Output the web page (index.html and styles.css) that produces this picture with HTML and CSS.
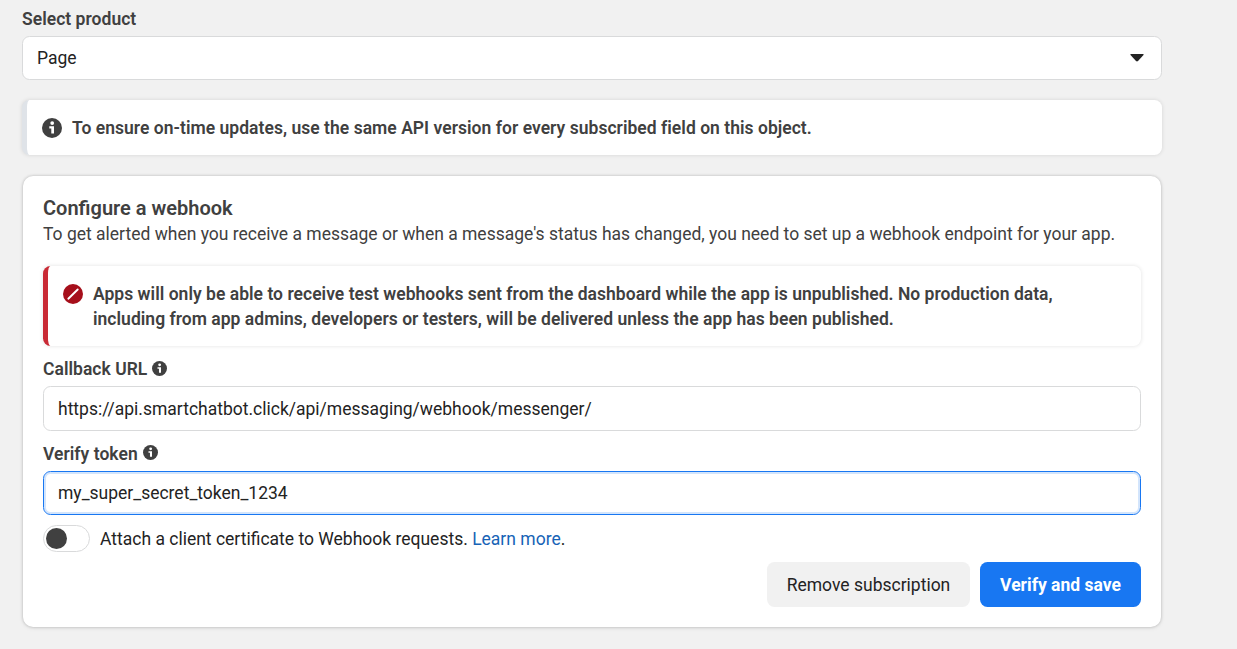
FILE: index.html
```html
<!DOCTYPE html>
<html lang="en">
<head>
<meta charset="utf-8">
<title>Configure a webhook</title>
<link rel="stylesheet" href="styles.css">
</head>
<body>
<svg class="defs" aria-hidden="true">
  <symbol id="info" viewBox="0 0 20 20">
    <circle cx="10" cy="10" r="10" fill="#404040"/>
    <circle cx="10.2" cy="5.1" r="1.9" fill="#fff"/>
    <path d="M7.3 8.2h4.7v7.4H9.3v-5.2H7.3z" fill="#fff"/>
  </symbol>
</svg>
<main class="page">
  <div class="label product-label"><span>Select product</span></div>
  <div class="select"><span>Page</span>
    <svg class="caret" viewBox="0 0 14 8"><path d="M.9 0h12.2q.9.1.4.9L8 7.1q-1 .9-2 0L.5.9Q0 .1.9 0z" fill="#232323"/></svg>
  </div>
  <div class="notice notice-info">
    <svg class="notice-icon"><use href="#info"/></svg>
    <div class="notice-text"><span>To ensure on-time updates, use the same API version for every subscribed field on this object.</span></div>
  </div>
  <section class="card">
    <h2 class="title"><span>Configure a webhook</span></h2>
    <p class="description"><span>To get alerted when you receive a message or when a message's status has changed, you need to set up a webhook endpoint for your app.</span></p>
    <div class="notice notice-error">
      <svg class="notice-icon" viewBox="0 0 20 20"><circle cx="10" cy="10" r="10" fill="#a60f1b"/><path d="M5.3 14.7l9.4-9.2" stroke="#fff" stroke-width="1.9" stroke-linecap="round"/></svg>
      <div class="notice-text"><span>Apps will only be able to receive test webhooks sent from the dashboard while the app is unpublished. No production data,</span><br><span>including from app admins, developers or testers, will be delivered unless the app has been published.</span></div>
    </div>
    <div class="label callback-label"><span>Callback URL</span><svg class="hint"><use href="#info"/></svg></div>
    <div class="field">https://api.smartchatbot.click/api/messaging/webhook/messenger/</div>
    <div class="label token-label"><span>Verify token</span><svg class="hint"><use href="#info"/></svg></div>
    <div class="field focused">my_super_secret_token_1234</div>
    <div class="certificate">
      <div class="toggle"><div class="knob"></div></div>
      <span class="certificate-text">Attach a client certificate to Webhook requests. <a class="link">Learn more</a>.</span>
    </div>
    <div class="actions">
      <button class="button secondary">Remove subscription</button>
      <button class="button primary">Verify and save</button>
    </div>
  </section>
</main>
</body>
</html>
```
FILE: styles.css
```css
* { box-sizing: border-box; }
body {
  margin: 0;
  background: #f1f1f1;
  font: 400 17.5px/25px Roboto, "Liberation Sans", sans-serif;
  color: #232323;
}
.defs { position: absolute; width: 0; height: 0; }
.page { width: 1162px; padding: 6px 0 30px 22px; }
.label {
  display: flex;
  align-items: center;
  gap: 5px;
  font-weight: 600;
  letter-spacing: .03px;
  color: #404040;
}
.product-label { height: 30px; padding-bottom: 3px; }
.select {
  display: flex;
  align-items: center;
  justify-content: space-between;
  height: 44px;
  padding: 0 17px 0 14px;
  border: 1px solid #d9dadb;
  border-radius: 7.5px;
  background: #fff;
}
.caret { width: 14px; height: 8px; }
.notice {
  display: flex;
  gap: 10px;
  border-radius: 7.5px;
  background: #fff;
  box-shadow: 0 0 4px rgba(0, 0, 0, .12);
  font-weight: 600;
  letter-spacing: .03px;
  color: #404040;
}
.notice-info {
  height: 55px;
  margin-top: 20px;
  padding: 16px 15px;
  border-left: 5px solid #dfe3e8;
}
.notice-icon { flex: none; width: 20px; height: 20px; margin-top: 2px; }
.notice-text { white-space: nowrap; }
.card {
  height: 451px;
  margin: 21px 1px 0;
  padding: 20px 20px 0;
  border-radius: 10px;
  background: #fff;
  box-shadow: 0 0 3px rgba(0, 0, 0, .22), 0 1px 5px rgba(0, 0, 0, .08);
}
.title { margin: 0; font-size: 20px; line-height: 25px; font-weight: 600; color: #404040; }
.description { margin: 0; padding-top: 1px; color: #404040; letter-spacing: -.006px; white-space: nowrap; }
.notice-error {
  height: 80px;
  margin-top: 19px;
  padding: 16px 15px;
  border-left: 5px solid #c92a35;
  letter-spacing: .024px;
}
.callback-label { margin-top: 11px; }
.hint { width: 15px; height: 15px; margin-top: -2px; }
.token-label .hint { margin-top: -4px; }
.field {
  height: 45px;
  margin-top: 4px;
  padding: 10px 14px 0;
  border: 1px solid #d9dadb;
  border-radius: 7.5px;
}
.token-label { margin-top: 11px; }
.field.focused {
  height: 44px;
  margin-top: 4px;
  padding-top: 9px;
  border-color: #1877f2;
  box-shadow: inset 0 0 0 2px #d3e5fc;
}
.certificate { display: flex; align-items: center; gap: 10px; margin-top: 10px; height: 27px; }
.certificate-text { padding-top: 2px; }
.toggle {
  width: 47px;
  height: 27px;
  padding: 2px;
  border: 1px solid #d9dadb;
  border-radius: 14px;
}
.knob { width: 21px; height: 21px; border-radius: 50%; background: #404040; }
.link { color: #1763b6; }
.actions { display: flex; justify-content: flex-end; gap: 10px; margin-top: 10px; }
.button {
  height: 45px;
  padding: 2px 0 0;
  border: 0;
  border-radius: 7.5px;
  font: inherit;
}
.secondary { width: 203px; background: #f1f1f1; color: #232323; }
.primary { width: 161px; background: #1877f2; color: #fff; font-weight: 700; }
```
